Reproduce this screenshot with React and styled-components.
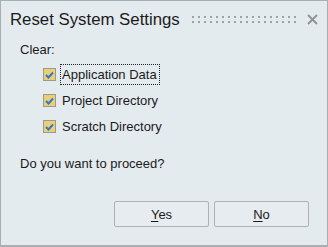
import React from "react";
import styled, { createGlobalStyle } from "styled-components";

const Global = createGlobalStyle`
  html, body { margin: 0; padding: 0; background: #e4ebef; }
  body { font-family: "Liberation Sans", Arial, sans-serif; }
`;

const Dialog = styled.div`
  box-sizing: border-box;
  width: 328px;
  height: 247px;
  background: #e4ebef;
  border: 1px solid #a9aeb2;
  border-bottom-width: 2px;
  display: flex;
  flex-direction: column;
  color: #1a1a1a;
`;

const TitleBar = styled.div`
  display: flex;
  align-items: center;
  height: 37px;
  padding: 0 9px 0 9px;
`;

const Title = styled.div`
  font-size: 16.8px;
  color: #1b1b1b;
  white-space: nowrap;
`;

const Grip = styled.svg`
  margin-left: 12px;
  flex: none;
`;

const Close = styled.svg`
  margin-left: auto;
  flex: none;
`;

const Body = styled.div`
  padding: 4px 0 0 19px;
  font-size: 13px;
  flex: 1;
`;

const Label = styled.div`
  line-height: 15px;
`;

const List = styled.div`
  display: flex;
  flex-direction: column;
  padding: 7px 0 0 23px;
  gap: 5px;
`;

const Row = styled.label`
  display: flex;
  align-items: center;
  height: 21px;
  gap: 4px;
`;

const Box = styled.span`
  box-sizing: border-box;
  width: 13px;
  height: 13px;
  border: 1px solid #9a9a94;
  background: #ebcf72;
  display: flex;
  align-items: center;
  justify-content: center;
`;

const Text = styled.span`
  padding: 2px 2px 2px 1px;
  border: 1px dotted ${(p) => (p.focused ? "#222" : "transparent")};
  line-height: 15px;
`;

const Question = styled.div`
  line-height: 15px;
  margin-top: 19px;
`;

const Buttons = styled.div`
  display: flex;
  justify-content: flex-end;
  gap: 5px;
  padding: 0 18px 18px 0;
`;

const Button = styled.button`
  box-sizing: border-box;
  width: 95px;
  height: 26px;
  background: #e6ecf0;
  border: 1px solid #adb1b4;
  border-radius: 2px;
  font-family: "Liberation Sans", Arial, sans-serif;
  font-size: 13px;
  color: #1a1a1a;
  padding: 0;
  u { text-underline-offset: 2px; }
`;

function Check() {
  return (
    <Box>
      <svg width="9" height="8" viewBox="0 0 9 8">
        <path d="M1 4 L3.5 6.5 L8 1.5" fill="none" stroke="#2a7ad6" strokeWidth="2" />
      </svg>
    </Box>
  );
}

const items = ["Application Data", "Project Directory", "Scratch Directory"];

export default function App() {
  return (
    <>
      <Global />
      <Dialog>
        <TitleBar>
          <Title>Reset System Settings</Title>
          <Grip width="106" height="7">
            <defs>
              <pattern id="dots" width="6" height="5" patternUnits="userSpaceOnUse">
                <rect width="2" height="2" fill="#9ba1a5" />
              </pattern>
            </defs>
            <rect width="106" height="7" fill="url(#dots)" />
          </Grip>
          <Close width="11" height="11" viewBox="0 0 11 11">
            <path d="M1 1 L10 10 M10 1 L1 10" stroke="#8d9194" strokeWidth="1.8" />
          </Close>
        </TitleBar>
        <Body>
          <Label>Clear:</Label>
          <List>
            {items.map((t, i) => (
              <Row key={t}>
                <Check />
                <Text focused={i === 0}>{t}</Text>
              </Row>
            ))}
          </List>
          <Question>Do you want to proceed?</Question>
        </Body>
        <Buttons>
          <Button><u>Y</u>es</Button>
          <Button><u>N</u>o</Button>
        </Buttons>
      </Dialog>
    </>
  );
}
